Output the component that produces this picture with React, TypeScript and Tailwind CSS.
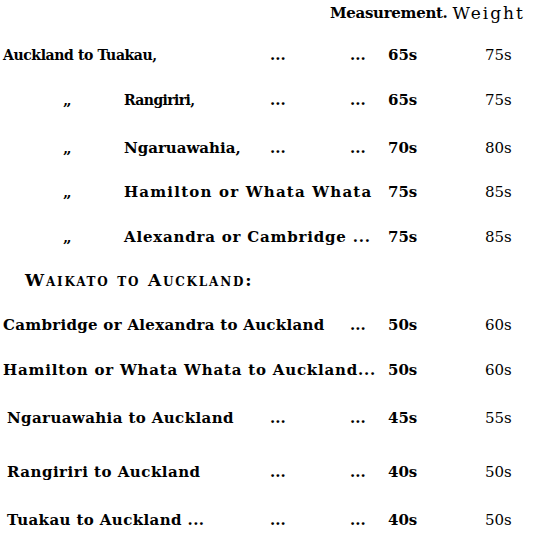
import React from 'react';

interface RateRow {
  ditto?: boolean;
  label: string;
  span?: number;
  dots1?: boolean;
  dots2?: boolean;
  measure: string;
  weight: string;
  gap: string;
  track: string;
  indent?: string;
}

const outward: RateRow[] = [
  { label: 'Auckland to Tuakau,', dots1: true, dots2: true, measure: '65s', weight: '75s', gap: 'mt-[20px]', track: 'text-[14px] tracking-[-0.4px]' },
  { ditto: true, label: 'Rangiriri,', dots1: true, dots2: true, measure: '65s', weight: '75s', gap: 'mt-[23px]', track: 'text-[14px] tracking-[-0.6px]' },
  { ditto: true, label: 'Ngaruawahia,', dots1: true, dots2: true, measure: '70s', weight: '80s', gap: 'mt-[26px]', track: 'tracking-[0px]' },
  { ditto: true, label: 'Hamilton or Whata Whata', span: 3, measure: '75s', weight: '85s', gap: 'mt-[22px]', track: 'tracking-[1.2px]' },
  { ditto: true, label: 'Alexandra or Cambridge ...', span: 3, measure: '75s', weight: '85s', gap: 'mt-[23px]', track: 'tracking-[0.8px]' },
];

const inward: RateRow[] = [
  { label: 'Cambridge or Alexandra to Auckland', span: 2, dots2: true, measure: '50s', weight: '60s', gap: 'mt-[23px]', track: 'tracking-[0.3px]' },
  { label: 'Hamilton or Whata Whata to Auckland...', span: 3, measure: '50s', weight: '60s', gap: 'mt-[23px]', track: 'tracking-[0.8px]' },
  { label: 'Ngaruawahia to Auckland', dots1: true, dots2: true, measure: '45s', weight: '55s', gap: 'mt-[26px]', track: 'tracking-[0.4px]', indent: 'pl-[7px]' },
  { label: 'Rangiriri to Auckland', dots1: true, dots2: true, measure: '40s', weight: '50s', gap: 'mt-[32px]', track: 'tracking-[0.5px]', indent: 'pl-[7px]' },
  { label: 'Tuakau to Auckland ...', dots1: true, dots2: true, measure: '40s', weight: '50s', gap: 'mt-[26px]', track: 'tracking-[0.4px]', indent: 'pl-[7px]' },
];

function Row({ row }: { row: RateRow }) {
  const span = row.span ?? 1;
  return (
    <div className={`${row.gap} grid h-[22px] grid-cols-[264px_84px_36px_97px_1fr] items-center whitespace-nowrap leading-[22px]`}>
      <div
        className={
          span === 3 ? 'col-span-3 flex' : span === 2 ? 'col-span-2 flex' : 'flex'
        }
      >
        {row.ditto ? (
          <>
            <span className="w-[124px] pl-[63px]">„</span>
            <span className={row.track}>{row.label}</span>
          </>
        ) : (
          <span className={`${row.indent ?? 'pl-[3px]'} ${row.track}`}>{row.label}</span>
        )}
      </div>
      {span === 1 && <div className="pl-[6px]">{row.dots1 ? '...' : ''}</div>}
      {span <= 2 && <div className="pl-[2px]">{row.dots2 ? '...' : ''}</div>}
      <div className="pl-[4px]">{row.measure}</div>
      <div className="pl-[4px] font-normal">{row.weight}</div>
    </div>
  );
}

export default function App() {
  return (
    <div className="h-[546px] w-[547px] overflow-hidden bg-white font-['DejaVu_Serif',serif] text-[15px] font-bold text-black">
      <div className="mt-[2px] flex h-[22px] items-center whitespace-nowrap pl-[330px] leading-[22px]">
        <span className="tracking-[-0.3px]">Measurement.</span>
        <span className="ml-[5px] text-[17px] font-normal tracking-[2px]">Weight</span>
      </div>

      {outward.map((r) => (
        <Row key={r.label} row={r} />
      ))}

      <div className="mt-[21px] h-[22px] whitespace-nowrap pl-[25px] text-[17px] leading-[22px] tracking-[1.8px] [font-variant:small-caps]">
        Waikato to Auckland:
      </div>

      {inward.map((r) => (
        <Row key={r.label} row={r} />
      ))}
    </div>
  );
}
